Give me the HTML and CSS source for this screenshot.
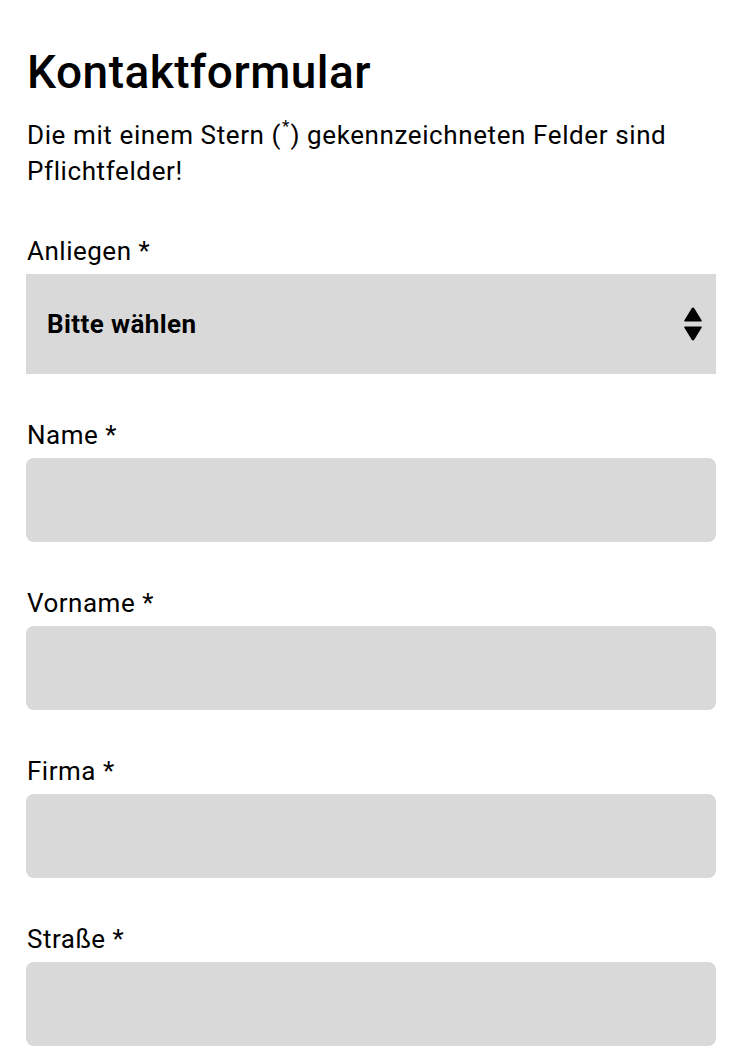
FILE: index.html
```html
<!DOCTYPE html>
<html lang="de">
<head>
<meta charset="utf-8">
<title>Kontaktformular</title>
<link rel="stylesheet" href="styles.css">
</head>
<body>
<main class="page">
  <h1 class="title">Kontaktformular</h1>
  <p class="intro">Die mit einem Stern (<span class="star">*</span>) gekennzeichneten Felder sind Pflichtfelder!</p>
  <form class="form">
    <div class="group">
      <label class="label" for="anliegen">Anliegen *</label>
      <div class="select-wrap">
        <select id="anliegen" class="select">
          <option>Bitte wählen</option>
        </select>
        <svg class="select-icon" width="18" height="34" viewBox="0 0 18 34" aria-hidden="true">
          <path d="M9 0.5 Q9.8 0.5 10.4 1.4 L17.6 13.2 Q18.2 14.6 16.8 14.6 L1.2 14.6 Q-0.2 14.6 0.4 13.2 L7.6 1.4 Q8.2 0.5 9 0.5 Z" fill="#000"/>
          <path d="M9 33.5 Q9.8 33.5 10.4 32.6 L17.6 20.8 Q18.2 19.4 16.8 19.4 L1.2 19.4 Q-0.2 19.4 0.4 20.8 L7.6 32.6 Q8.2 33.5 9 33.5 Z" fill="#000"/>
        </svg>
      </div>
    </div>
    <div class="group">
      <label class="label" for="name">Name *</label>
      <input id="name" class="input" type="text">
    </div>
    <div class="group">
      <label class="label" for="vorname">Vorname *</label>
      <input id="vorname" class="input" type="text">
    </div>
    <div class="group">
      <label class="label" for="firma">Firma *</label>
      <input id="firma" class="input" type="text">
    </div>
    <div class="group">
      <label class="label" for="strasse">Straße *</label>
      <input id="strasse" class="input" type="text">
    </div>
  </form>
</main>
</body>
</html>
```

FILE: styles.css
```css
* {
  box-sizing: border-box;
}

html, body {
  margin: 0;
  padding: 0;
  background: #fff;
}

body {
  font-family: Roboto, "Liberation Sans", sans-serif;
  color: #000;
}

.page {
  padding: 44px 30px 0 26px;
}

.title {
  margin: 0 0 17px 1px;
  font-size: 46px;
  line-height: 56px;
  font-weight: 500;
  letter-spacing: 0.5px;
}

.intro {
  margin: 0 0 44px 1px;
  font-size: 26px;
  line-height: 36px;
  font-weight: 400;
  letter-spacing: 0.6px;
}

.star {
  display: inline-block;
  margin: 1px 1px 0;
  font-size: 17px;
  line-height: 17px;
  letter-spacing: 0;
  vertical-align: top;
}

.form {
  display: flex;
  flex-direction: column;
  gap: 43px;
}

.group {
  display: flex;
  flex-direction: column;
  gap: 5px;
}

.label {
  display: block;
  margin-left: 1px;
  font-size: 26px;
  line-height: 36px;
  letter-spacing: 0.5px;
}

.select-wrap {
  position: relative;
}

.select {
  display: block;
  width: 100%;
  height: 100px;
  margin: 0;
  padding: 0 60px 0 21px;
  border: none;
  border-radius: 0;
  background: #d9d9d9;
  font-family: Roboto, "Liberation Sans", sans-serif;
  font-size: 26px;
  font-weight: 700;
  letter-spacing: 0.4px;
  color: #000;
  -webkit-appearance: none;
  appearance: none;
  outline: none;
}

.select-icon {
  position: absolute;
  right: 14px;
  top: 33px;
  pointer-events: none;
}

.input {
  display: block;
  width: 100%;
  height: 84px;
  margin: 0;
  padding: 0 21px;
  border: none;
  border-radius: 8px;
  background: #d9d9d9;
  font-family: Roboto, "Liberation Sans", sans-serif;
  font-size: 26px;
  outline: none;
}
```
